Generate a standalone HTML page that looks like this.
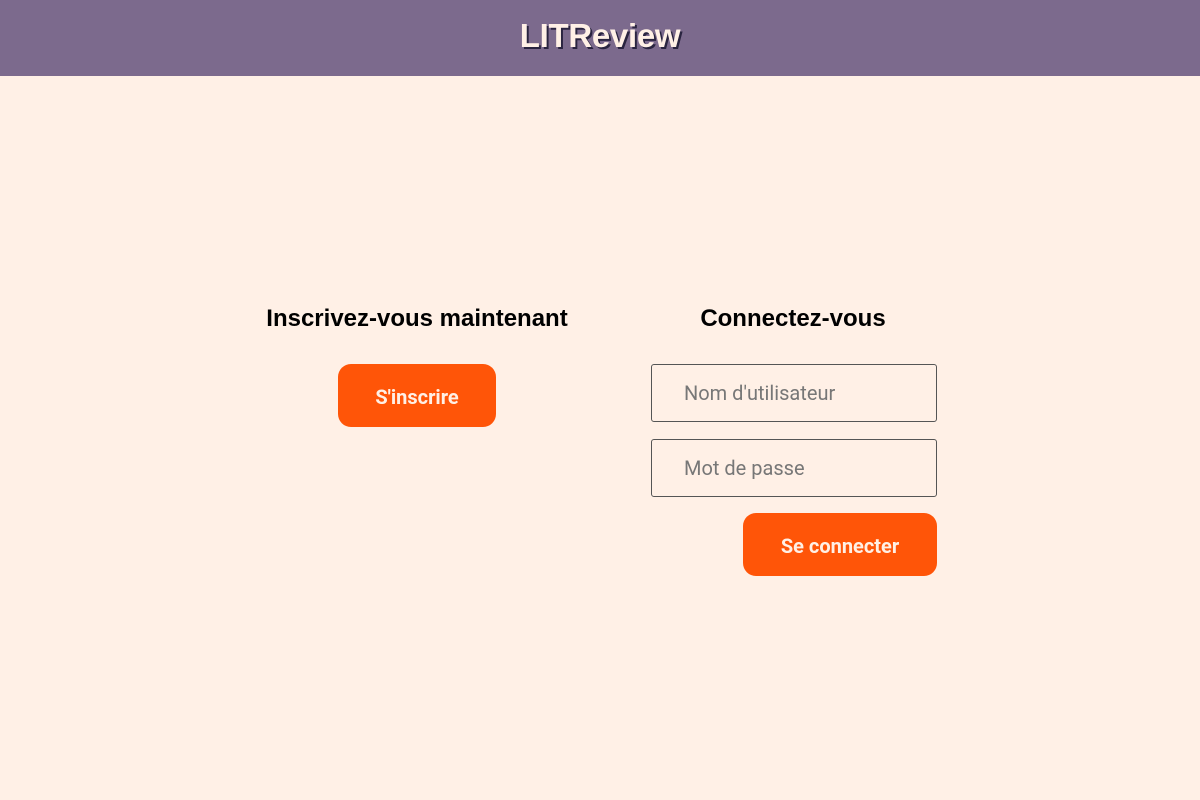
<!DOCTYPE html>
<html><head><meta charset="utf-8"><style>
*{margin:0;padding:0;box-sizing:border-box}
body{width:1200px;height:800px;background:#fff0e6;font-family:"Liberation Sans",Arial,sans-serif;position:relative;overflow:hidden}
header{height:76px;background:#7c6a8d;text-align:center}
header h1{font-size:33px;font-weight:bold;color:#fff0e6;line-height:72px;text-shadow:2px 2px 0 #2a2440;letter-spacing:-0.3px}
h2{position:absolute;font-size:24px;font-weight:bold;color:#000;text-align:center;top:305px}
.btn{position:absolute;background:#ff5508;color:#fff0e6;font-weight:bold;font-size:20px;border-radius:13px;display:flex;align-items:center;justify-content:center;padding-top:3px;font-family:"Roboto","Liberation Sans",sans-serif}
.inp{position:absolute;left:651px;width:286px;height:58px;border:1px solid #555;border-radius:3px;color:#777;font-size:20px;padding-left:32px;display:flex;align-items:center;font-family:"Roboto","Liberation Sans",sans-serif}
</style></head><body>
<header><h1>LITReview</h1></header>
<h2 style="left:217px;width:400px">Inscrivez-vous maintenant</h2>
<h2 style="left:593px;width:400px">Connectez-vous</h2>
<div class="btn" style="left:338px;top:364px;width:158px;height:63px">S'inscrire</div>
<div class="inp" style="top:364px">Nom d'utilisateur</div>
<div class="inp" style="top:439px">Mot de passe</div>
<div class="btn" style="left:743px;top:513px;width:194px;height:63px">Se connecter</div>
</body></html>
